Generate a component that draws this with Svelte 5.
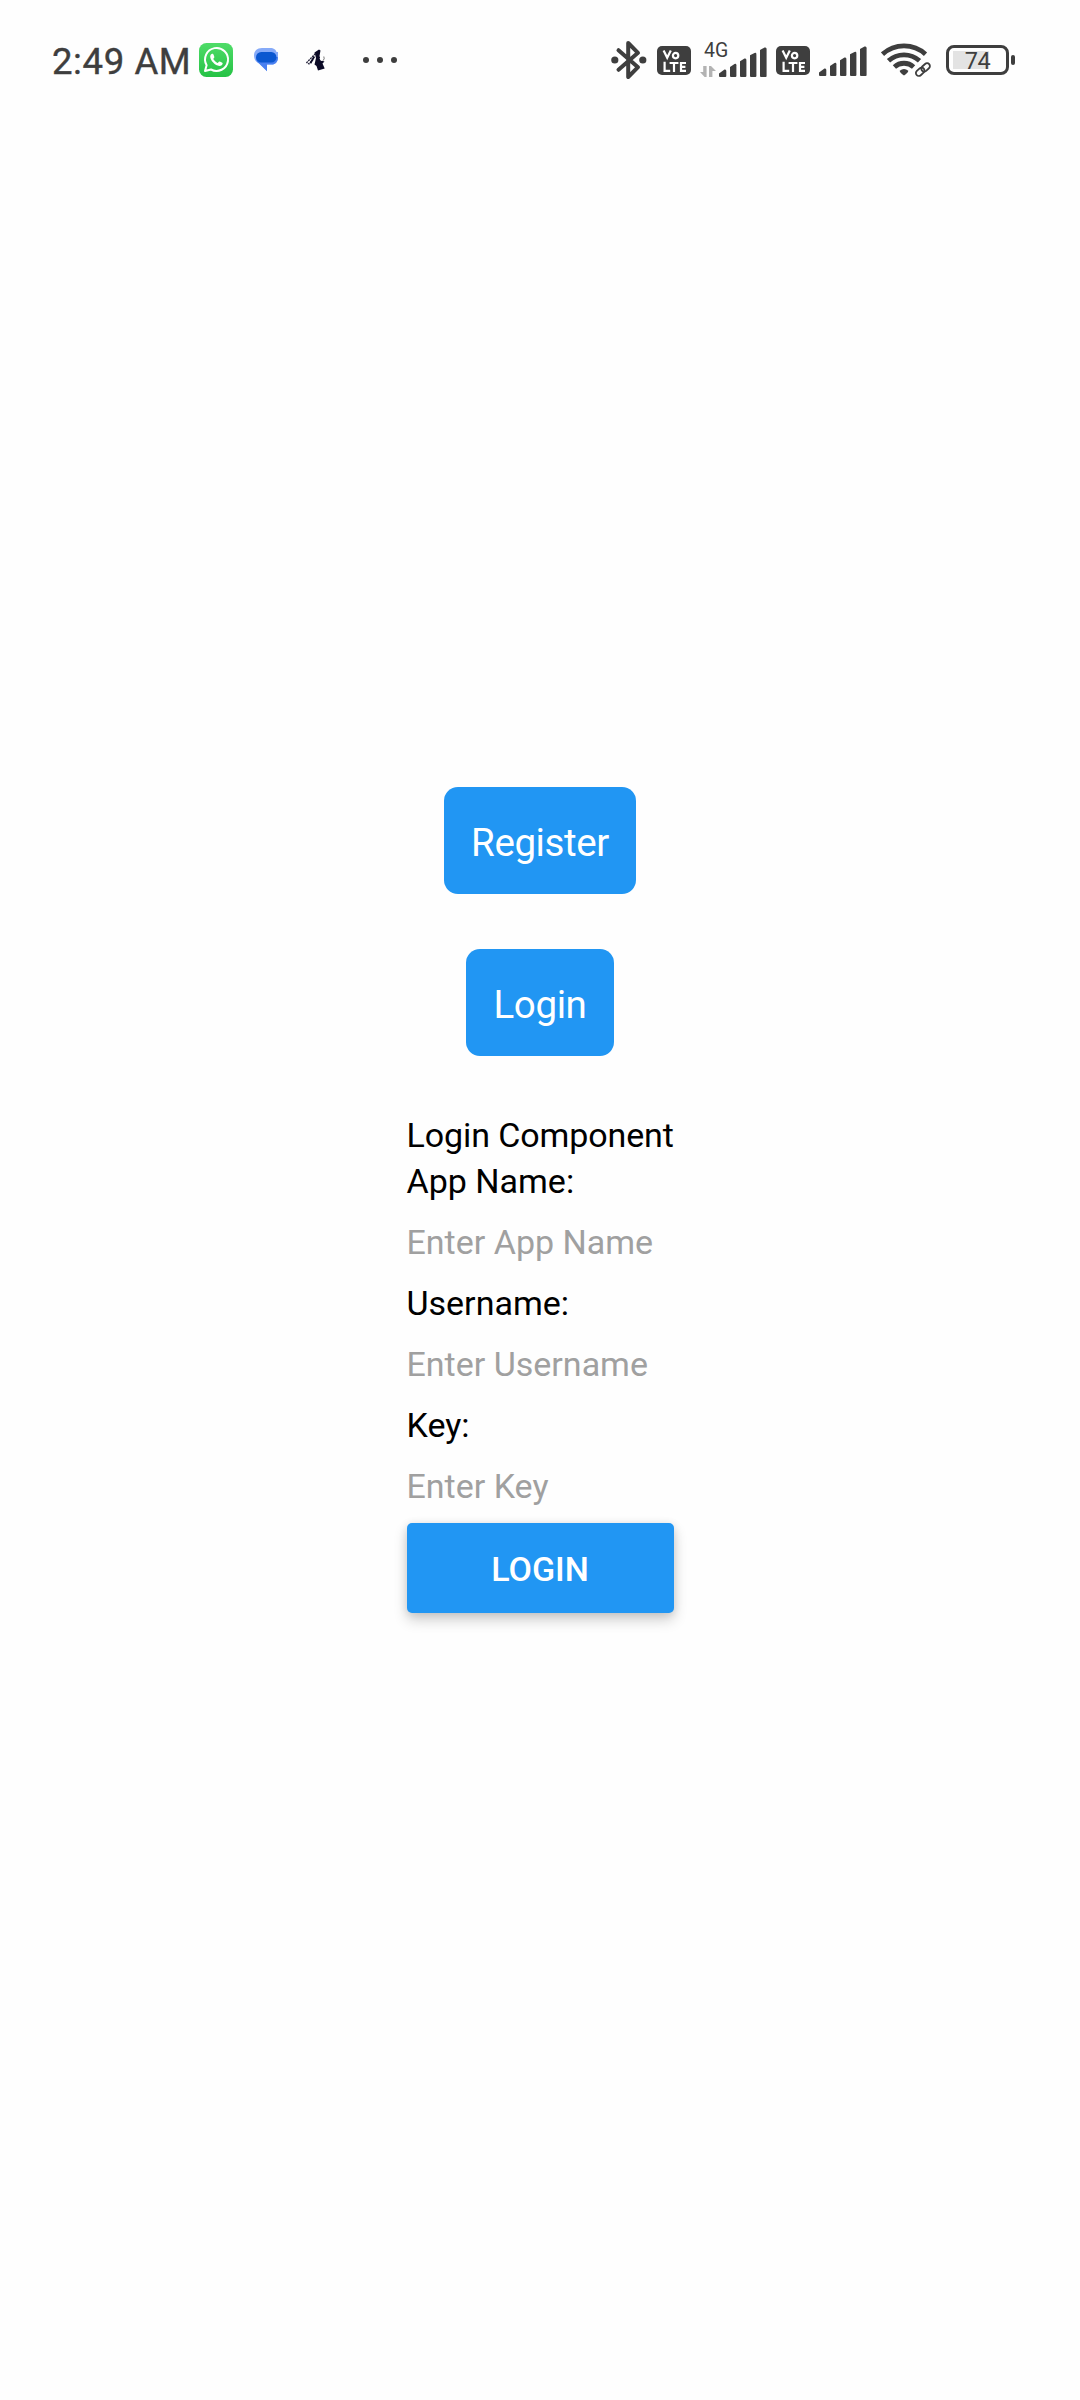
<script>
  const fields = [
    { label: 'App Name:', placeholder: 'Enter App Name' },
    { label: 'Username:', placeholder: 'Enter Username' },
    { label: 'Key:', placeholder: 'Enter Key' }
  ];
</script>

{#snippet volte()}
  <svg class="volte" viewBox="0 0 34 29" width="34" height="29">
    <rect width="34" height="29" rx="5" fill="#3e3e3e" />
    <g fill="none" stroke="#fff" stroke-width="2.2">
      <path d="M6.6 4.6 L10.2 11.8 L13.8 4.6" />
      <circle cx="18.6" cy="9.6" r="2.7" />
      <path d="M7.6 15.8 V24.8 H13.2 M12.6 17 H21.4 M17 17 V26 M29 17 H24 V24.8 H29 M24 20.9 H28.4" />
    </g>
  </svg>
{/snippet}

{#snippet bars()}
  <svg class="bars" viewBox="0 0 49 30" width="49" height="30" fill="#3e3e3e">
    <path d="M1 30 Q0 30 0 29 V26.5 L5.5 22.5 Q7.3 22 7.3 24 V29 Q7.3 30 6.3 30 Z" />
    <path d="M12 30 Q11 30 11 29 V20 L15.5 17 Q17.4 16.4 17.4 18.3 V29 Q17.4 30 16.4 30 Z" />
    <path d="M22 30 Q21 30 21 29 V14.3 L25.5 11.6 Q27.4 11 27.4 13 V29 Q27.4 30 26.4 30 Z" />
    <path d="M32 30 Q31 30 31 29 V8.3 L35.5 6 Q37.4 5.4 37.4 7.3 V29 Q37.4 30 36.4 30 Z" />
    <path d="M42 30 Q41 30 41 29 V3 L45.5 .6 Q47.6 0 47.6 2 V29 Q47.6 30 46.6 30 Z" />
  </svg>
{/snippet}

<div class="screen">
  <header class="status">
    <div class="side">
      <span class="time">2:49 AM</span>
      <svg class="whatsapp" viewBox="0 0 34 34" width="34" height="34">
        <defs>
          <linearGradient id="wa" x1="0" y1="0" x2="0" y2="1">
            <stop offset="0" stop-color="#4fdc68" /><stop offset="1" stop-color="#25c245" />
          </linearGradient>
        </defs>
        <rect width="34" height="34" rx="7.5" fill="url(#wa)" />
        <path d="M6 28 L7.6 22.2 A11.5 11.5 0 1 1 12 26.5 Z" fill="none" stroke="#fff" stroke-width="2" stroke-linejoin="round" />
        <path d="M13.3 10.7 C12.4 10.7 11.2 12 11.2 13.6 C11.2 17.5 16.2 22.9 20.4 22.9 C22.2 22.9 23.7 21.7 23.7 20.2 C23.7 19.5 20.9 18.2 20.3 18.4 C19.7 18.6 19.1 20 18.6 19.9 C17.4 19.6 14.6 16.9 14.4 16 C14.3 15.4 15.5 14.9 15.4 14.1 C15.3 13.5 14.4 10.9 13.9 10.7 Z" fill="#fff" />
      </svg>
      <svg class="messages" viewBox="0 0 24 24" width="24" height="24">
        <path d="M8 0 H16 C20 0 22 2 22.5 4 H24 V10 C24 14 21 16.5 18 16.5 H13 V23 L5.5 15.5 C1.5 14 0 11 0 7.5 C0 3 3 0 8 0 Z" fill="#86aaf8" />
        <path d="M2 10 L24 9 C24 14 21 16.6 18 16.6 H13 V23.3 L5 15.6 C3 14.5 2 12.5 2 10 Z" fill="#4a80f0" />
        <rect x="2" y="4" width="20.5" height="10.5" rx="5.2" fill="#0b57d0" />
      </svg>
      <svg class="app" viewBox="0 0 20 22" width="20" height="22">
        <path d="M8.5 3.5 L13 .5 L14.5 1.5 L13.5 7 L15 11.5 L18.5 12.5 L16.5 14.5 L18.7 19.5 L12 21.5 L10.5 17 L8.5 15.5 L10 9 Z" fill="#0b0a26" />
        <path d="M9.5 4.5 L.8 13.5 L3 15 L7 10.5" fill="none" stroke="#26243c" stroke-width="1.3" stroke-dasharray="2 .8" />
        <path d="M8.3 7.5 L4.4 14.2" stroke="#0b0a26" stroke-width="1.8" />
        <circle cx="16" cy="9.6" r="2.3" fill="#fff" />
        <path d="M17.8 7.5 Q19 10 17 11.7" fill="none" stroke="#777" stroke-width="1" />
      </svg>
      <svg class="more" viewBox="0 0 34 6" width="34" height="6" fill="#3e3e3e">
        <circle cx="3" cy="3" r="3" /><circle cx="17" cy="3" r="3" /><circle cx="31" cy="3" r="3" />
      </svg>
    </div>

    <div class="side">
      <svg class="bluetooth" viewBox="0 0 36 40" width="36" height="40">
        <path d="M7.5 10.2 L27 27.2 L17.2 37 V3 L27 12.8 L7.5 29.8" fill="none" stroke="#3e3e3e" stroke-width="4" stroke-linejoin="round" stroke-linecap="round" />
        <circle cx="3.8" cy="20" r="3.6" fill="#3e3e3e" /><circle cx="31.8" cy="20" r="3.6" fill="#3e3e3e" />
      </svg>
      {@render volte()}
      <div class="network">
        <span class="gen">4G</span>
        <div class="signal">
          <svg viewBox="0 0 16 11" width="16" height="11" fill="#b3b3b3">
            <path d="M3.2 0 H6.6 V11 H4.6 L0 6 H3.2 Z M9 0 H11 L16 5 H12.4 V11 H9 Z" />
          </svg>
          {@render bars()}
        </div>
      </div>
      {@render volte()}
      {@render bars()}
      <svg class="wifi" viewBox="0 0 50 36" width="50" height="36">
        <g fill="none" stroke="#3e3e3e" stroke-width="4.8">
          <path d="M1.5 12.2 A32 32 0 0 1 44.5 12.2" />
          <path d="M7.5 18.8 A23 23 0 0 1 38.5 18.8" />
          <path d="M13.4 25 A14.2 14.2 0 0 1 32.6 25" />
        </g>
        <path d="M18.7 28.8 Q23 25.2 27.3 28.8 Q27 31 23 33.6 Q19 31 18.7 28.8 Z" fill="#3e3e3e" />
        <g fill="none" stroke="#3e3e3e" stroke-width="1.8">
          <rect x="-4.8" y="-2.9" width="9.6" height="5.8" rx="2.9" transform="translate(39.2 29.8) rotate(-42)" />
          <rect x="-4.8" y="-2.9" width="9.6" height="5.8" rx="2.9" transform="translate(44.6 25.4) rotate(-42)" />
        </g>
      </svg>
      <div class="battery"><span>74</span></div>
    </div>
  </header>

  <main>
    <button class="pill">Register</button>
    <button class="pill">Login</button>
    <form>
      <p>Login Component</p>
      {#each fields as field}
        <label>
          {field.label}
          <input type="text" placeholder={field.placeholder} />
        </label>
      {/each}
      <button class="submit" type="button">LOGIN</button>
    </form>
  </main>
</div>

<style>
  :global(body) {
    margin: 0;
    background: #fefefe;
  }
  .screen {
    width: 1080px;
    height: 2400px;
    overflow: hidden;
    background: #fefefe;
    font-family: Roboto, 'Liberation Sans', sans-serif;
    display: flex;
    flex-direction: column;
  }
  svg {
    display: block;
    flex: none;
  }
  .status {
    height: 120px;
    padding: 0 65px 0 52px;
    box-sizing: border-box;
    display: flex;
    justify-content: space-between;
    color: #3e3e3e;
  }
  .side {
    height: 120px;
    display: flex;
    align-items: center;
  }
  .time {
    width: 147px;
    font-size: 36.5px;
    line-height: 42px;
    letter-spacing: 0.6px;
    font-weight: 450;
    -webkit-text-stroke: 0.4px #3e3e3e;
    white-space: nowrap;
    padding-top: 4px;
  }
  .messages { margin-left: 21px; }
  .app { margin-left: 28px; }
  .more { margin-left: 37px; }
  .volte { margin: 1px 0 0 10px; }
  .network {
    margin-left: 9px;
    height: 33px;
    display: flex;
    flex-direction: column;
    justify-content: flex-end;
    position: relative;
  }
  .gen {
    position: absolute;
    left: 4px;
    top: -4px;
    font-size: 19.5px;
    line-height: 22px;
  }
  .signal {
    display: flex;
    align-items: flex-end;
    gap: 3px;
  }
  .network + .volte { margin-left: 8px; }
  .volte + .bars { margin: 1px 0 0 9px; }
  .wifi { margin-left: 13px; }
  .battery {
    position: relative;
    width: 63px;
    height: 30px;
    margin: 0 6px 0 15px;
    box-sizing: border-box;
    border: 3px solid #3e3e3e;
    border-radius: 8px;
    background: linear-gradient(#e3e3e3, #e3e3e3) 4px 3px / 36px 18px no-repeat;
    text-align: center;
    font-size: 23.5px;
    line-height: 26px;
    letter-spacing: -0.5px;
  }
  .battery::after {
    content: '';
    position: absolute;
    right: -9px;
    top: 7px;
    width: 4px;
    height: 10px;
    border-radius: 2px;
    background: #3e3e3e;
  }
  main {
    padding-top: 667px;
    display: flex;
    flex-direction: column;
    align-items: center;
  }
  button {
    font-family: inherit;
    border: 0;
    background: #2196f3;
    color: #fff;
    display: block;
  }
  .pill {
    height: 107px;
    padding: 4px 27.5px 0;
    margin-bottom: 55px;
    border-radius: 14px;
    font-size: 38.5px;
    letter-spacing: -0.4px;
    line-height: 52px;
  }
  form {
    width: 267px;
    font-size: 34px;
    line-height: 46px;
    color: #000;
  }
  p,
  label {
    display: block;
    margin: 0;
    white-space: nowrap;
  }
  p {
    padding-top: 1px;
    letter-spacing: -0.1px;
  }
  input {
    display: block;
    width: 267px;
    height: 76px;
    padding: 0;
    border: 0;
    outline: 0;
    background: transparent;
    font: inherit;
    color: #000;
  }
  input::placeholder {
    color: #a0a0a0;
    opacity: 1;
  }
  .submit {
    width: 267px;
    height: 90px;
    margin-top: -1px;
    padding: 1px 0 0;
    border-radius: 5px;
    font-size: 34px;
    font-weight: 500;
    box-shadow: 0 7px 14px rgba(0, 0, 0, 0.19), 0 1px 8px rgba(0, 0, 0, 0.1);
  }
</style>
